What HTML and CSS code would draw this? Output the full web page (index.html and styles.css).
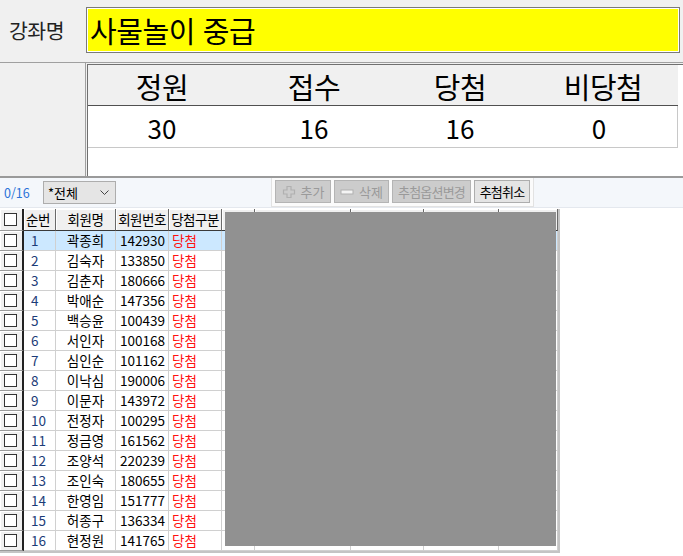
FILE: index.html
```html
<!DOCTYPE html>
<html lang="ko">
<head>
<meta charset="utf-8">
<link rel="stylesheet" href="styles.css">
</head>
<body>
<div class="page">
  <div class="top">
    <div class="label">강좌명</div>
    <div class="title-box"><span>사물놀이 중급</span></div>
  </div>
  <div class="stats-area">
    <div class="stats-left"></div>
    <div class="stats-box">
      <div class="stats-head">
        <div>정원</div><div>접수</div><div>당첨</div><div>비당첨</div>
      </div>
      <div class="stats-vals">
        <div>30</div><div>16</div><div>16</div><div>0</div>
      </div>
    </div>
  </div>
  <div class="toolbar">
    <div class="count">0/16</div>
    <div class="select"><span>*전체</span>
      <svg class="chev" width="9" height="6" viewBox="0 0 9 6"><path d="M0.5 0.5 L4.5 4.5 L8.5 0.5" fill="none" stroke="#444" stroke-width="1"/></svg>
    </div>
    <div class="btn-group">
      <div class="btn disabled btn-add">
        <svg width="14" height="14" viewBox="0 0 14 14"><path d="M5 1.5h4v3.5h3.5v4H9v3.5H5V9H1.5V5H5z" fill="none" stroke="#b0b0b0" stroke-width="1.2"/></svg>
        <span>추가</span>
      </div>
      <div class="btn disabled btn-del">
        <svg width="14" height="8" viewBox="0 0 14 8"><rect x="1" y="2" width="12" height="4" fill="#f4f4f4" stroke="#b0b0b0"/></svg>
        <span>삭제</span>
      </div>
      <div class="btn disabled btn-opt">추첨옵션변경</div>
      <div class="btn btn-cancel">추첨취소</div>
    </div>
  </div>
  <div class="grid-area">
    <div class="grid">
      <div class="row head">
        <div class="c chk"><span class="box"></span></div>
        <div class="c left">순번</div>
        <div class="c center">회원명</div>
        <div class="c center">회원번호</div>
        <div class="c center">당첨구분</div>
        <div class="c"></div><div class="c"></div><div class="c"></div><div class="c"></div><div class="c"></div>
      </div>
      <div class="row sel"><div class="c chk"><span class="box"></span></div><div class="c num">1</div><div class="c center">곽종희</div><div class="c right">142930</div><div class="c red">당첨</div><div class="c"></div><div class="c"></div><div class="c"></div><div class="c"></div><div class="c"></div></div>
      <div class="row"><div class="c chk"><span class="box"></span></div><div class="c num">2</div><div class="c center">김숙자</div><div class="c right">133850</div><div class="c red">당첨</div><div class="c"></div><div class="c"></div><div class="c"></div><div class="c"></div><div class="c"></div></div>
      <div class="row"><div class="c chk"><span class="box"></span></div><div class="c num">3</div><div class="c center">김춘자</div><div class="c right">180666</div><div class="c red">당첨</div><div class="c"></div><div class="c"></div><div class="c"></div><div class="c"></div><div class="c"></div></div>
      <div class="row"><div class="c chk"><span class="box"></span></div><div class="c num">4</div><div class="c center">박애순</div><div class="c right">147356</div><div class="c red">당첨</div><div class="c"></div><div class="c"></div><div class="c"></div><div class="c"></div><div class="c"></div></div>
      <div class="row"><div class="c chk"><span class="box"></span></div><div class="c num">5</div><div class="c center">백승윤</div><div class="c right">100439</div><div class="c red">당첨</div><div class="c"></div><div class="c"></div><div class="c"></div><div class="c"></div><div class="c"></div></div>
      <div class="row"><div class="c chk"><span class="box"></span></div><div class="c num">6</div><div class="c center">서인자</div><div class="c right">100168</div><div class="c red">당첨</div><div class="c"></div><div class="c"></div><div class="c"></div><div class="c"></div><div class="c"></div></div>
      <div class="row"><div class="c chk"><span class="box"></span></div><div class="c num">7</div><div class="c center">심인순</div><div class="c right">101162</div><div class="c red">당첨</div><div class="c"></div><div class="c"></div><div class="c"></div><div class="c"></div><div class="c"></div></div>
      <div class="row"><div class="c chk"><span class="box"></span></div><div class="c num">8</div><div class="c center">이낙심</div><div class="c right">190006</div><div class="c red">당첨</div><div class="c"></div><div class="c"></div><div class="c"></div><div class="c"></div><div class="c"></div></div>
      <div class="row"><div class="c chk"><span class="box"></span></div><div class="c num">9</div><div class="c center">이문자</div><div class="c right">143972</div><div class="c red">당첨</div><div class="c"></div><div class="c"></div><div class="c"></div><div class="c"></div><div class="c"></div></div>
      <div class="row"><div class="c chk"><span class="box"></span></div><div class="c num">10</div><div class="c center">전정자</div><div class="c right">100295</div><div class="c red">당첨</div><div class="c"></div><div class="c"></div><div class="c"></div><div class="c"></div><div class="c"></div></div>
      <div class="row"><div class="c chk"><span class="box"></span></div><div class="c num">11</div><div class="c center">정금영</div><div class="c right">161562</div><div class="c red">당첨</div><div class="c"></div><div class="c"></div><div class="c"></div><div class="c"></div><div class="c"></div></div>
      <div class="row"><div class="c chk"><span class="box"></span></div><div class="c num">12</div><div class="c center">조양석</div><div class="c right">220239</div><div class="c red">당첨</div><div class="c"></div><div class="c"></div><div class="c"></div><div class="c"></div><div class="c"></div></div>
      <div class="row"><div class="c chk"><span class="box"></span></div><div class="c num">13</div><div class="c center">조인숙</div><div class="c right">180655</div><div class="c red">당첨</div><div class="c"></div><div class="c"></div><div class="c"></div><div class="c"></div><div class="c"></div></div>
      <div class="row"><div class="c chk"><span class="box"></span></div><div class="c num">14</div><div class="c center">한영임</div><div class="c right">151777</div><div class="c red">당첨</div><div class="c"></div><div class="c"></div><div class="c"></div><div class="c"></div><div class="c"></div></div>
      <div class="row"><div class="c chk"><span class="box"></span></div><div class="c num">15</div><div class="c center">허종구</div><div class="c right">136334</div><div class="c red">당첨</div><div class="c"></div><div class="c"></div><div class="c"></div><div class="c"></div><div class="c"></div></div>
      <div class="row"><div class="c chk"><span class="box"></span></div><div class="c num">16</div><div class="c center">현정원</div><div class="c right">141765</div><div class="c red">당첨</div><div class="c"></div><div class="c"></div><div class="c"></div><div class="c"></div><div class="c"></div></div>
      <div class="redact"></div>
    </div>
  </div>
</div>
</body>
</html>
```

FILE: styles.css
```css
* { box-sizing: border-box; }
html, body { margin: 0; padding: 0; }
body {
  width: 683px;
  height: 556px;
  overflow: hidden;
  background: #f0f0f0;
  font-family: "Noto Sans CJK KR", "Noto Sans", sans-serif;
  color: #000;
}
.page { display: flex; flex-direction: column; height: 556px; }

.top {
  height: 63px;
  display: flex;
  align-items: flex-start;
  padding-top: 7px;
  border-bottom: 1px solid #a0a0a0;
}
.label {
  width: 86px;
  padding-left: 9px;
  font-size: 20.5px;
  line-height: 46px;
  color: #222;
  letter-spacing: -0.5px;
}
.title-box {
  width: 594px;
  height: 46px;
  border: 1px solid #7a7a7a;
  box-shadow: inset 0 0 0 1px #fff;
  background: #ffff00;
  padding-left: 3px;
  display: flex;
  align-items: center;
}
.title-box span {
  font-size: 29px;
  line-height: 32px;
  letter-spacing: -0.4px;
}

.stats-area {
  display: flex;
  height: 115px;
  border-bottom: 2px solid #9a9a9a;
}
.stats-left {
  width: 86px;
  border-right: 1px solid #a0a0a0;
}
.stats-box {
  flex: 1;
  margin-left: 1px;
  margin-top: 1px;
  border-top: 1px solid #707070;
  border-left: 1px solid #707070;
  background: #fff;
}
.stats-head, .stats-vals {
  display: grid;
  grid-template-columns: 148px 156px 136px 150px;
  width: 590px;
}
.stats-head {
  height: 41px;
  background: #f0f0f0;
  border-bottom: 1px solid #505050;
  font-size: 29px;
  line-height: 42px;
  text-align: center;
  letter-spacing: -0.5px;
}
.stats-vals {
  height: 42px;
  border-bottom: 1px solid #c8c8c8;
  border-right: 1px solid #c8c8c8;
  font-size: 26px;
  line-height: 44px;
  text-align: center;
}
.stats-vals > div:nth-child(4) { padding-right: 8px; }

.toolbar {
  height: 30px;
  background: #f4f7fb;
  display: flex;
  align-items: center;
  border-bottom: 1px solid #e4e8ee;
}
.count {
  width: 43px;
  padding-left: 4px;
  font-size: 12.5px;
  color: #2a72d8;
}
.select {
  width: 73px;
  height: 23px;
  border: 1px solid #adadad;
  background: #e5e5e5;
  font-size: 13px;
  display: flex;
  align-items: center;
  justify-content: space-between;
  padding: 0 6px 0 4px;
}
.chev { margin-top: 1px; }
.btn-group {
  margin-left: 155px;
  height: 29px;
  background: #fbfbfb;
  border: 1px solid #e2e2e2;
  border-top: none;
  display: flex;
  align-items: center;
  gap: 3px;
  padding: 0 3px;
  margin-top: -1px;
}
.btn {
  height: 23px;
  border: 1px solid #b4b4b4;
  background: #cccccc;
  color: #9a9a9a;
  font-size: 13px;
  display: flex;
  align-items: center;
  justify-content: center;
  gap: 5px;
  white-space: nowrap;
}
.btn-add { width: 56px; }
.btn-del { width: 55px; }
.btn-opt { width: 79px; letter-spacing: -0.8px; }
.btn-cancel {
  width: 56px;
  background: #e4e4e4;
  border-color: #adadad;
  color: #000;
  letter-spacing: -0.8px;
}

.grid-area {
  flex: 1;
  background: #fff;
  padding-top: 1px;
}
.grid {
  position: relative;
  width: 560px;
  border-right: 2px solid #c4c4c4;
  border-bottom: 2px solid #c4c4c4;
}
.row {
  display: grid;
  grid-template-columns: 24px 32px 60px 53px 53px 33px 96px 73px 75px 59px;
  height: 20px;
  font-size: 13.5px;
}
.row.head { height: 22px; background: #f0f0f0; }
.c {
  border-right: 1px solid #d0d0d0;
  border-bottom: 1px solid #d0d0d0;
  line-height: 19px;
  white-space: nowrap;
  overflow: hidden;
}
.head .c {
  border-right: 1px solid #6a6a6a;
  border-bottom: 1px solid #3a3a3a;
  box-shadow: inset 1px 1px 0 #fff;
  line-height: 21px;
  letter-spacing: -0.5px;
}
.c.chk {
  background: #f0f0f0;
  border-right: 2px solid #222;
  border-bottom: 1px solid #9a9a9a;
  box-shadow: inset 1px 1px 0 #fff;
  display: flex;
  align-items: center;
  padding-left: 4px;
}
.box {
  width: 13px;
  height: 13px;
  background: #fff;
  border: 1px solid #333;
}
.left { padding-left: 2px; }
.center { text-align: center; }
.right { text-align: right; padding-right: 3px; }
.num { padding-left: 7px; color: #1c3c78; }
.red { color: #ff1010; padding-left: 3px; }
.row.sel .c:not(.chk) { background: #cce8ff; }

.redact {
  position: absolute;
  left: 225px;
  top: 3px;
  width: 331px;
  height: 334px;
  background: #919191;
}
```
